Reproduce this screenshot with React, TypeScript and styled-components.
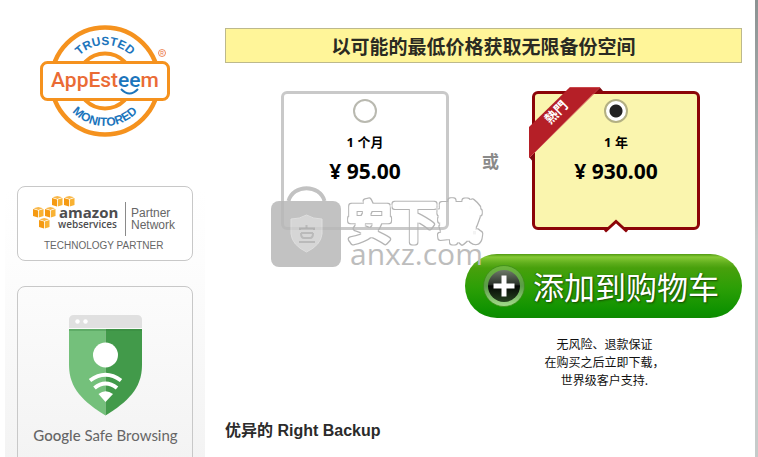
import React, { useState } from "react";
import styled, { createGlobalStyle, css } from "styled-components";

const GlobalStyle = createGlobalStyle`
  * { box-sizing: border-box; }
  body {
    margin: 0;
    background: #fff;
    color: #2b2b2b;
    font-family: "Liberation Sans", "Noto Sans CJK SC", sans-serif;
  }
`;

const Page = styled.div`
  display: flex;
  height: 100vh;
  overflow: hidden;
  padding-left: 5px;
`;

const Sidebar = styled.aside`
  flex: none;
  width: 200px;
  height: 560px;
  padding: 0 12px;
  display: flex;
  flex-direction: column;
  gap: 25px;
  background: linear-gradient(#fff 190px, #fdfdfd 260px, #f3f3f3 460px);
`;

const SealLink = styled.a`
  display: block;
  height: 161px;
`;

const Badge = styled.a`
  display: block;
  border: 1px solid #c8c8c8;
  border-radius: 8px;
  line-height: 0;
`;

const AwsBadge = styled(Badge)`
  background: #fff;
  height: 75px;
`;

const SafeBadge = styled(Badge)`
  height: 200px;
`;

const Main = styled.main`
  flex: 1;
  min-width: 0;
  padding: 28px 13px 0 20px;
`;

const OfferTitle = styled.h1`
  margin: 0;
  border: 1px solid #bdb98c;
  background: #fff599;
  font: bold 19px/33px "Noto Sans CJK SC", sans-serif;
  color: #2a2a22;
  text-align: center;
`;

const Plans = styled.div`
  display: flex;
  justify-content: center;
  align-items: stretch;
  margin: 28px 0 24px;
  padding-left: 14px;
`;

const Or = styled.span`
  width: 83px;
  text-align: center;
  font: bold 17px/139px "Noto Sans CJK SC", sans-serif;
  color: #8a8a8a;
`;

const PlanCard = styled.label<{ $featured?: boolean }>`
  position: relative;
  width: 168px;
  height: 139px;
  padding-top: 5px;
  display: flex;
  flex-direction: column;
  align-items: center;
  border: 3px solid #c9c9c9;
  border-radius: 6px;
  background: #fff;
  color: #000;
  cursor: pointer;
  ${(p) =>
    p.$featured &&
    css`
      border-color: #8c0408;
      background: #faf5ae;
    `}
`;

const Radio = styled.input`
  appearance: none;
  flex: none;
  width: 24px;
  height: 24px;
  margin: 0;
  border: 2px solid #b9b9b0;
  border-radius: 50%;
  background: #fff;
  &:checked {
    border-color: #b3b083;
    background: radial-gradient(circle, #222 6px, #fff 7px);
  }
`;

const Term = styled.span`
  margin-top: 9px;
  font: bold 13px/20px "Noto Sans", "Noto Sans CJK SC", sans-serif;
`;

const Price = styled.span`
  margin-top: 3px;
  font: bold 21px/32px "Noto Sans", "Noto Sans CJK SC", sans-serif;
`;

const Ribbon = styled.svg`
  position: absolute;
  left: -6px;
  top: -7px;
`;

const Notch = styled.svg`
  position: absolute;
  left: 50%;
  bottom: -6px;
  margin-left: -12px;
`;

const Purchase = styled.div`
  width: 277px;
  margin-left: auto;
  text-align: center;
`;

const CartButton = styled.button`
  display: flex;
  align-items: center;
  width: 100%;
  height: 64px;
  padding: 0 0 0 18px;
  gap: 8px;
  border: 0;
  border-radius: 32px;
  background: linear-gradient(#4f9a10, #86c936 3px, #5fae1c 9px, #48a00c 14px, #2c9f06 34px, #0d9100 58px, #0d8a00);
  color: #fff;
  font: 31px/64px "Noto Sans CJK SC", sans-serif;
  text-shadow: 1px 1px 2px #174d00, -1px 0 1px #2b6f08;
  cursor: pointer;
`;

const Assurance = styled.p`
  margin: 17px 0 0;
  padding-left: 2px;
  font: 12px/18px "Noto Sans CJK SC", sans-serif;
  color: #111;
`;

const SectionTitle = styled.h2`
  margin: 30px 0 0;
  font-size: 16px;
  line-height: 24px;
  color: #2b2b2b;
`;

const Edge = styled.div`
  flex: none;
  width: 3px;
  background: linear-gradient(#8b9292, #c6cbca 240px);
`;

const Watermark = styled.svg`
  position: absolute;
  left: 265px;
  top: 180px;
  pointer-events: none;
`;

function TrustSeal() {
  return (
    <svg width="176" height="161" viewBox="17 0 176 161" role="img" aria-label="AppEsteem Trusted Monitored">
      <defs>
        <path id="arcTop" d="M69 81 A36 36 0 0 1 141 81" />
        <path id="arcBottom" d="M60 81 A45 45 0 0 0 150 81" />
      </defs>
      <g fill="none" stroke="#f5921e">
        <circle cx="105" cy="81" r="53.5" strokeWidth="4.5" />
        <circle cx="105" cy="81" r="27.5" strokeWidth="4" />
      </g>
      <rect x="41.5" y="62.5" width="127" height="37" rx="6" fill="#fff" stroke="#f5921e" strokeWidth="3" />
      <g fontFamily="'Liberation Sans Narrow', 'Liberation Sans', sans-serif" fontWeight="bold" fontSize="12" fill="#1c75bc" textAnchor="middle">
        <text><textPath href="#arcTop" startOffset="50%">TRUSTED</textPath></text>
        <text><textPath href="#arcBottom" startOffset="50%">MONITORED</textPath></text>
      </g>
      <text x="105" y="87" textAnchor="middle" fontFamily="Roboto, sans-serif" fontWeight="500" fontSize="21" fill="#ea6b35">
        AppEst<tspan fill="#1c75bc">ee</tspan>m
      </text>
      <path d="M121 89 Q129.500 98 138 89" fill="none" stroke="#1c75bc" strokeWidth="2" />
      <circle cx="162" cy="53" r="3.500" fill="none" stroke="#ea6b35" strokeWidth=".8" />
      <text x="162" y="55" textAnchor="middle" fontFamily="Liberation Sans, sans-serif" fontSize="5" fill="#ea6b35">R</text>
    </svg>
  );
}

function Cube({ x, y }: { x: number; y: number }) {
  return (
    <g transform={`translate(${x} ${y})`}>
      <path d="M0 2 L5 3.600 V10.500 L0 9 Z" fill="#f59a12" />
      <path d="M10.500 2 L5.800 3.600 V10.500 L10.500 9 Z" fill="#f9b233" />
      <path d="M.5 1.300 L5.300 0 L10 1.300 L5.300 2.900 Z" fill="#f9b84a" />
    </g>
  );
}

function AwsLogo() {
  return (
    <svg width="174" height="73" viewBox="18 187 174 73" role="img" aria-label="Amazon Web Services Partner Network">
      <Cube x={52} y={196} />
      <Cube x={64} y={196} />
      <Cube x={33} y={207} />
      <Cube x={45} y={207} />
      <Cube x={39} y={218} />
      <g fontFamily="'Open Sans', sans-serif" fill="#4d4d4f">
        <text x="59" y="218" fontSize="15" fontWeight="bold">amazon</text>
        <text x="58" y="228" fontSize="10" fontWeight="600">webservices</text>
      </g>
      <path d="M125.500 202 V236" stroke="#8a8a8a" />
      <g fontFamily="'Liberation Sans', sans-serif" fill="#666">
        <text x="131" y="217" fontSize="12">Partner</text>
        <text x="131" y="229" fontSize="12">Network</text>
        <text x="44" y="249" fontSize="10">TECHNOLOGY PARTNER</text>
      </g>
    </svg>
  );
}

function SafeBrowsingLogo() {
  return (
    <svg width="174" height="170" viewBox="18 287 174 170" role="img" aria-label="Google Safe Browsing">
      <path d="M69 328 V320 Q69 315 74 315 H137 Q142 315 142 320 V328 Z" fill="#e0e0e0" />
      <circle cx="77.500" cy="321.500" r="2.200" fill="#fff" />
      <circle cx="85.500" cy="321.500" r="2.200" fill="#fff" />
      <path d="M69 329 H105.500 V415.500 C84 402 69 389 69 365 Z" fill="#74c07b" />
      <path d="M142 329 H105.500 V415.500 C127 402 142 389 142 365 Z" fill="#429a4a" />
      <path d="M69 329 H142 V331 H69 Z" fill="#2f7d38" opacity=".3" />
      <circle cx="105.500" cy="355" r="12.500" fill="#fff" />
      <g fill="none" stroke="#fff" strokeWidth="4">
        <path d="M90 380.500 Q105.500 369 121 380.500" />
        <path d="M94.500 388 Q105.500 379 117 388" />
      </g>
      <path d="M98.500 394 Q105.500 388.500 113 394 L105.500 402 Z" fill="#fff" />
      <text x="105.500" y="441" textAnchor="middle" fontFamily="Lato, sans-serif" fontSize="15" fill="#666">
        <tspan fontWeight="500">Google</tspan> Safe Browsing
      </text>
    </svg>
  );
}

function PlusIcon() {
  return (
    <svg width="42" height="42" viewBox="0 0 42 42" aria-hidden="true">
      <defs>
        <linearGradient id="ring" x1="0" y1="0" x2="0" y2="1">
          <stop offset="0" stopColor="#6eb83c" />
          <stop offset=".5" stopColor="#5a9c48" />
          <stop offset="1" stopColor="#a4dc8c" />
        </linearGradient>
        <linearGradient id="disc" x1="0" y1="0" x2="0" y2="1">
          <stop offset="0" stopColor="#6d7a68" />
          <stop offset=".45" stopColor="#2b322a" />
          <stop offset=".5" stopColor="#050805" />
          <stop offset="1" stopColor="#26421f" />
        </linearGradient>
      </defs>
      <circle cx="21" cy="21" r="20.500" fill="url(#ring)" stroke="#3d8c1a" strokeWidth=".8" />
      <circle cx="21" cy="21" r="16" fill="url(#disc)" />
      <path d="M21 10.500 V31.500 M10.500 21 H31.500" stroke="#fff" strokeWidth="5" />
    </svg>
  );
}

function HotRibbon() {
  return (
    <Ribbon width="76" height="80" viewBox="529 87 76 80">
      <path d="M596 87.500 L600 87.500 L603 91 H594 Z" fill="#7d0a10" />
      <path d="M529 157 L534 163 V150 Z" fill="#7d0a10" />
      <path d="M570 87 H600 L529 158 V127 Z" fill="#b51f27" />
      <path d="M570 87.500 H600 L529 158" fill="none" stroke="#c9474b" />
      <text
        transform="translate(556 112) rotate(-45)"
        y="5"
        textAnchor="middle"
        fontFamily="'Noto Sans CJK TC', sans-serif"
        fontWeight="bold"
        fontSize="13"
        fill="#fff"
      >
        熱門
      </text>
    </Ribbon>
  );
}

function SiteMark() {
  return (
    <Watermark width="225" height="92" viewBox="265 180 225 92" aria-hidden="true">
      <defs>
        <filter id="outline" x="-10%" y="-10%" width="120%" height="120%">
          <feMorphology in="SourceGraphic" operator="erode" radius="1" result="inner" />
          <feComposite in="SourceGraphic" in2="inner" operator="out" />
        </filter>
      </defs>
      <g opacity=".85">
        <path d="M288.500 201 C293 184 320 184 324.500 201" fill="none" stroke="#b8b8b8" strokeWidth="4" />
        <rect x="271" y="201" width="70" height="66" rx="8" fill="#b8b8b8" />
        <path d="M291 219 Q300 219 306.500 215 Q313 219 322 219 V234 Q321 245 306.500 252 Q292 245 291 234 Z" fill="#cfcfcf" stroke="#dadada" />
        <path
          d="M306.500 225 V228 M300 230 V228.500 H314 V230 M301 233 H313 M301 233 Q301 238 304 238 H310 Q313 238 313 233 M299 242 H315"
          fill="none"
          stroke="#aeaeae"
          strokeWidth="2"
        />
      </g>
      <text x="347" y="239" fontFamily="'Noto Sans CJK SC', sans-serif" fontSize="45" fill="#b4b4b4" stroke="#b4b4b4" strokeWidth="6" strokeLinejoin="round" filter="url(#outline)">
        安下载
      </text>
      <text x="350" y="265" fontFamily="'Open Sans', sans-serif" fontSize="30" fill="#bdbdbd">
        anxz.com
      </text>
    </Watermark>
  );
}

export default function App() {
  const [plan, setPlan] = useState("year");
  return (
    <>
      <GlobalStyle />
      <Page>
        <Sidebar>
          <SealLink href="#"><TrustSeal /></SealLink>
          <AwsBadge href="#"><AwsLogo /></AwsBadge>
          <SafeBadge href="#"><SafeBrowsingLogo /></SafeBadge>
        </Sidebar>
        <Main>
          <OfferTitle>以可能的最低价格获取无限备份空间</OfferTitle>
          <Plans>
            <PlanCard>
              <Radio type="radio" name="plan" checked={plan === "month"} onChange={() => setPlan("month")} />
              <Term>1 个月</Term>
              <Price>¥ 95.00</Price>
            </PlanCard>
            <Or>或</Or>
            <PlanCard $featured>
              <HotRibbon />
              <Radio type="radio" name="plan" checked={plan === "year"} onChange={() => setPlan("year")} />
              <Term>1 年</Term>
              <Price>¥ 930.00</Price>
              <Notch width="24" height="14" viewBox="0 0 24 14" aria-hidden="true">
                <path d="M2 12 L12 3 L22 12 V14 H2 Z" fill="#fff" />
                <path d="M1 12.500 L12 2.500 L23 12.500" fill="none" stroke="#8c0408" strokeWidth="3" />
              </Notch>
            </PlanCard>
          </Plans>
          <Purchase>
            <CartButton type="button"><PlusIcon />添加到购物车</CartButton>
            <Assurance>
              无风险、退款保证<br />在购买之后立即下载，<br />世界级客户支持.
            </Assurance>
          </Purchase>
          <SectionTitle>优异的 Right Backup</SectionTitle>
        </Main>
        <Edge />
      </Page>
      <SiteMark />
    </>
  );
}
